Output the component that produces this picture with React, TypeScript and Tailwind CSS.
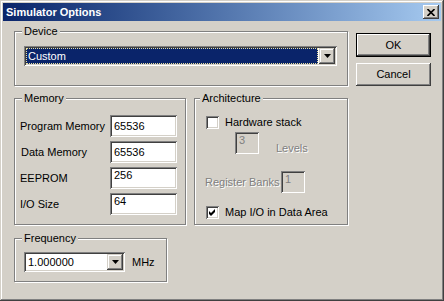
import React from "react";

const raised = "shadow-[inset_-1px_-1px_#404040,inset_1px_1px_#ffffff,inset_-2px_-2px_#808080,inset_2px_2px_#d4d0c8]";
const raisedCombo = "shadow-[inset_-1px_-1px_#404040,inset_1px_1px_#d4d0c8,inset_-2px_-2px_#808080,inset_2px_2px_#ffffff]";
const sunken = "shadow-[inset_1px_1px_#808080,inset_-1px_-1px_#ffffff,inset_2px_2px_#404040,inset_-2px_-2px_#d4d0c8]";
const groupBox = "m-0 p-0 min-w-0 border border-[#808080] shadow-[1px_1px_#ffffff,inset_1px_1px_#ffffff]";
const legend = "h-[13px] leading-[13px] px-[2px] bg-[#d4d0c8]";
const disabledText = "text-[#808080] [text-shadow:1px_1px_0_#ffffff]";

function Arrow() {
  return (
    <svg width="7" height="4" viewBox="0 0 7 4">
      <polygon points="0,0 7,0 3.5,4" fill="#000" />
    </svg>
  );
}

function Check() {
  return (
    <svg width="9" height="9" viewBox="0 0 9 9">
      <path d="M1 3 L3 5 L7 1 L7 4 L3 8 L1 6 Z" fill="#000" />
    </svg>
  );
}

function CheckBox({ checked }: { checked?: boolean }) {
  return (
    <div className={`w-[13px] h-[13px] bg-white flex items-center justify-center shrink-0 ${sunken}`}>
      {checked && <Check />}
    </div>
  );
}

function Edit({ value, className, top, disabled }: { value: string; className: string; top?: boolean; disabled?: boolean }) {
  return (
    <div
      className={`h-[22px] flex pl-[4px] ${top ? "items-start pt-[2px]" : "items-center"} ${disabled ? "bg-[#d4d0c8] text-[#808080]" : "bg-white"} ${sunken} ${className}`}
    >
      {value}
    </div>
  );
}

export default function App() {
  return (
    <div
      className="w-[444px] h-[301px] bg-[#d4d0c8] p-[3px] flex flex-col text-[11px] leading-[13px] text-black shadow-[inset_-1px_-1px_#404040,inset_1px_1px_#d4d0c8,inset_-2px_-2px_#808080,inset_2px_2px_#ffffff]"
      style={{ fontFamily: '"Liberation Sans", Arial, sans-serif' }}
    >
      {/* title bar */}
      <div className="h-[18px] flex items-center pl-[3px] bg-linear-to-r from-[#0a246a] to-[#a6caf0]">
        <span className="text-white font-bold text-[11px]">Simulator Options</span>
        <div className={`ml-auto mr-[2px] w-[16px] h-[14px] bg-[#d4d0c8] flex items-center justify-center ${raised}`}>
          <svg width="8" height="7" viewBox="0 0 8 7">
            <path d="M0.5 0 L7.5 7 M7.5 0 L0.5 7" stroke="#000" strokeWidth="1.6" />
          </svg>
        </div>
      </div>

      <div className="flex pt-[4px] pl-[11px]">
        <div className="w-[334px] flex flex-col">
          {/* Device */}
          <fieldset className={`${groupBox} h-[61px]`}>
            <legend className={`${legend} ml-[7px]`}>Device</legend>
            <div className="pt-[8px] pl-[9px]">
              <div className={`w-[313px] h-[20px] bg-white p-[2px] flex ${sunken}`}>
                <div className="flex-1 mr-[1px] bg-[#0a246a] border border-dotted border-[#e8e0a0] text-white flex items-center pl-[1px]">
                  Custom
                </div>
                <div className={`w-[16px] bg-[#d4d0c8] flex items-center justify-center ${raisedCombo}`}>
                  <Arrow />
                </div>
              </div>
            </div>
          </fieldset>

          <div className="flex gap-[8px] mt-[6px]">
            {/* Memory */}
            <fieldset className={`${groupBox} w-[172px] h-[133px]`}>
              <legend className={`${legend} ml-[7px]`}>Memory</legend>
              <div className="pt-[10px] pl-[5px] flex flex-col gap-[4px]">
                <div className="flex items-center">
                  <span className="w-[90px]">Program Memory</span>
                  <Edit value="65536" className="w-[67px]" />
                </div>
                <div className="flex items-center">
                  <span className="w-[90px] pl-[1px]">Data Memory</span>
                  <Edit value="65536" className="w-[67px]" />
                </div>
                <div className="flex items-center">
                  <span className="w-[90px]">EEPROM</span>
                  <Edit value="256" className="w-[67px]" top />
                </div>
                <div className="flex items-center">
                  <span className="w-[90px]">I/O Size</span>
                  <Edit value="64" className="w-[67px]" top />
                </div>
              </div>
            </fieldset>

            {/* Architecture */}
            <fieldset className={`${groupBox} w-[154px] h-[133px]`}>
              <legend className={`${legend} ml-[5px]`}>Architecture</legend>
              <div className="pt-[11px] pl-[11px] flex flex-col">
                <div className="flex items-center gap-[6px] h-[13px]">
                  <CheckBox />
                  <span>Hardware stack</span>
                </div>
                <div className="flex items-start mt-[3px] pl-[29px]">
                  <Edit value="3" className="w-[24px] pl-[3px]" top disabled />
                  <span className={`ml-[17px] mt-[10px] ${disabledText}`}>Levels</span>
                </div>
                <div className="flex items-start mt-[16px] -ml-[1px]">
                  <span className={`w-[76px] mt-[5px] ${disabledText}`}>Register Banks</span>
                  <Edit value="1" className="w-[24px] pl-[3px]" top disabled />
                </div>
                <div className="flex items-center gap-[6px] h-[13px] mt-[13px]">
                  <CheckBox checked />
                  <span>Map I/O in Data Area</span>
                </div>
              </div>
            </fieldset>
          </div>

          {/* Frequency */}
          <fieldset className={`${groupBox} w-[153px] h-[50px] mt-[7px]`}>
            <legend className={`${legend} ml-[7px]`}>Frequency</legend>
            <div className="pt-[7px] pl-[9px] flex items-center">
              <div className={`w-[101px] h-[20px] bg-white p-[2px] flex ${sunken}`}>
                <div className="flex-1 flex items-center pl-[2px]">1.000000</div>
                <div className={`w-[16px] bg-[#d4d0c8] flex items-center justify-center ${raisedCombo}`}>
                  <Arrow />
                </div>
              </div>
              <span className="ml-[7px]">MHz</span>
            </div>
          </fieldset>
        </div>

        {/* buttons */}
        <div className="ml-[8px] mt-[8px] flex flex-col gap-[6px]">
          <div className="w-[75px] h-[24px] border border-black">
            <div className={`w-full h-full bg-[#d4d0c8] flex items-center justify-center ${raised}`}>OK</div>
          </div>
          <div className={`w-[75px] h-[23px] bg-[#d4d0c8] flex items-center justify-center ${raised}`}>Cancel</div>
        </div>
      </div>
    </div>
  );
}
